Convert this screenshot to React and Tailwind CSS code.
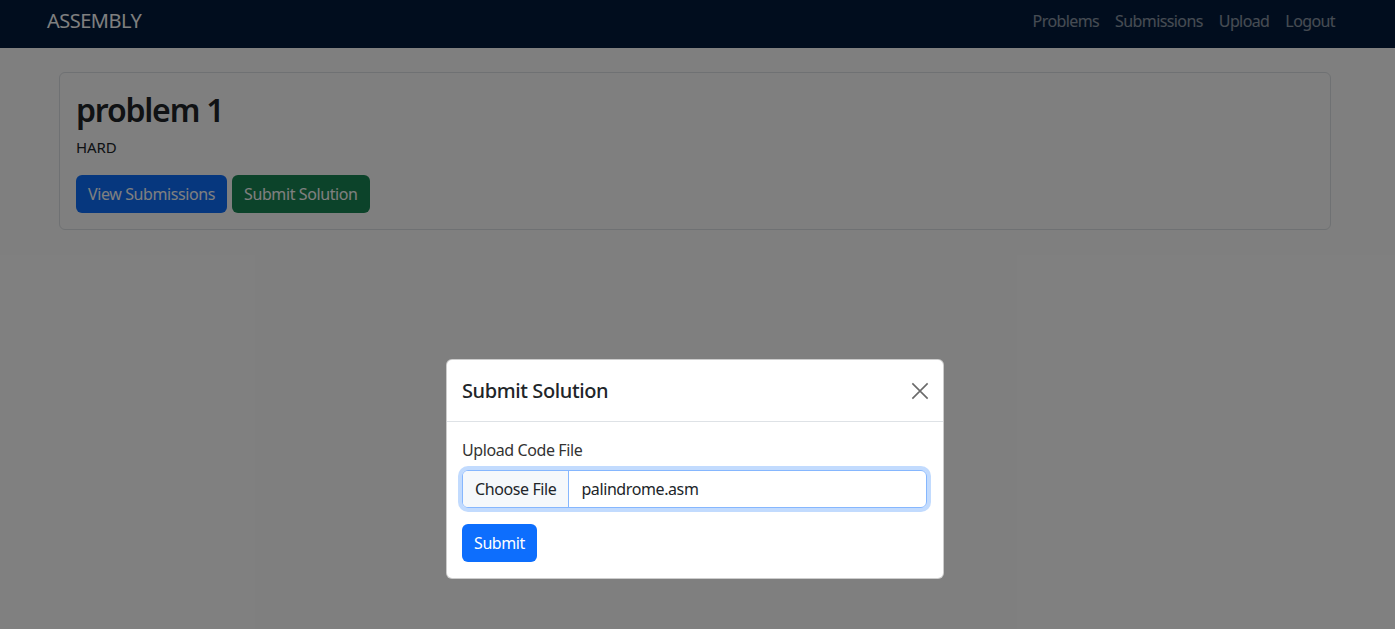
import React from "react";

export default function App() {
  const font = { fontFamily: '"Noto Sans", "Open Sans", sans-serif' };
  return (
    <div className="relative min-h-[629px] bg-white text-[#212529]" style={font}>
      <nav className="h-12 bg-[#021a3c] flex items-center justify-between pl-[47px] pr-[60px] pb-[6px]">
        <span className="text-[20px] text-white leading-none tracking-[-0.5px]">ASSEMBLY</span>
        <div className="flex items-center gap-4 text-[16px] text-white/55 tracking-[-0.6px]">
          <span>Problems</span>
          <span>Submissions</span>
          <span>Upload</span>
          <span>Logout</span>
        </div>
      </nav>
      <main className="pl-[59px] pr-[64px] pt-6">
        <div className="border border-[#dee2e6] rounded-md px-4 pt-[18px] pb-4">
          <h2 className="text-[32px] font-semibold leading-[1.2] tracking-[-1.2px]">problem 1</h2>
          <p className="text-[15px] mt-[7px] leading-[1.5] tracking-[-0.1px]">HARD</p>
          <div className="flex gap-[5px] mt-4 tracking-[-0.4px]">
            <button className="h-[38px] px-3 rounded-md bg-[#0d6efd] text-white text-[16px]">View Submissions</button>
            <button className="h-[38px] px-3 rounded-md bg-[#198754] text-white text-[16px]">Submit Solution</button>
          </div>
        </div>
      </main>

      <div className="absolute inset-0 bg-black/50" />

      <div className="absolute left-[446px] top-[359px] w-[498px] bg-white rounded-md border border-black/20 text-[#212529] tracking-[-0.4px]">
        <div className="flex items-center justify-between px-4 h-[62px] border-b border-[#dee2e6]">
          <h5 className="text-[20px] font-medium leading-[1.5] -ml-px">Submit Solution</h5>
          <svg width="18" height="18" viewBox="0 0 16 16" className="-mr-[2px] text-[#6a6a6a]">
            <path d="M1.2 1.2 L14.8 14.8 M14.8 1.2 L1.2 14.8" stroke="currentColor" strokeWidth="1.4" fill="none" />
          </svg>
        </div>
        <div className="p-4 -ml-px">
          <label className="block text-[16px] leading-[1.5] mb-2 text-[#333]">Upload Code File</label>
          <div className="flex h-[38px] rounded-md border border-[#86b7fe] shadow-[0_0_0_4px_rgba(13,110,253,0.25)] overflow-hidden">
            <div className="flex items-center px-3 bg-[#f5f8fb] border-r border-[#86b7fe] text-[16px]">Choose File</div>
            <div className="flex items-center px-3 text-[16px]">palindrome.asm</div>
          </div>
          <button className="mt-4 h-[38px] px-3 rounded-md bg-[#0d6efd] text-white text-[16px]">Submit</button>
        </div>
      </div>
    </div>
  );
}
